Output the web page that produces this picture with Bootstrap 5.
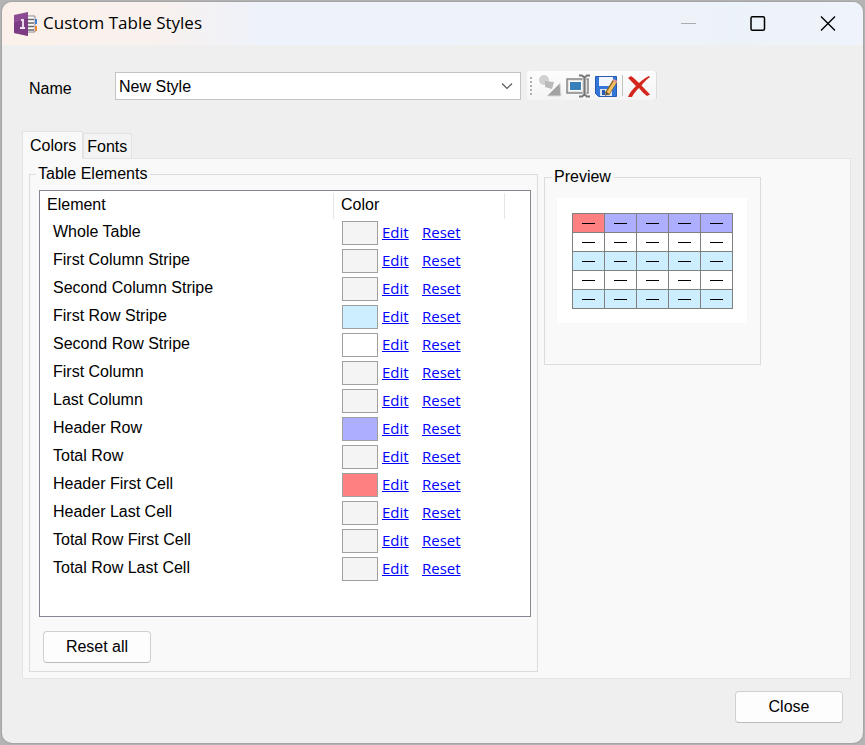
<!DOCTYPE html>
<html lang="en">
<head>
<meta charset="utf-8">
<meta name="viewport" content="width=device-width, initial-scale=1">
<title>Custom Table Styles</title>
<link href="https://cdn.jsdelivr.net/npm/bootstrap@5.3.0/dist/css/bootstrap.min.css" rel="stylesheet">
<style>
body{font:16px/20px "Liberation Sans",Arial,sans-serif;color:#000;background:#b4b4b4;padding:2px 2px 3px}
.dialog-window{min-height:calc(100vh - 5px);background:#efefef;border-radius:10px;box-shadow:0 0 1px 1px #a4a4a4}
.title-bar{height:43px;padding-left:12px;background:linear-gradient(90deg,#fbf1ea 0,#f8f1ee 18%,#eef2fa 30%,#eef3fa 75%,#ecf3f8 85%,#eff3fb 100%);border-radius:10px 10px 0 0}
.title-bar h1{font:17px/24px "Open Sans","Noto Sans",sans-serif;margin-left:5px;padding-bottom:2px}
.caption-btn{width:70px;height:43px;line-height:0}
.name-row{padding:26px 206px 0 27px}
.name-row label{width:86px;padding-top:6px}
.style-select{height:28px;padding:2px 32px 0 3px;border:1px solid #c4c4c4;border-radius:0;font-size:16px;line-height:20px;color:#000;background-size:12px 12px;background-position:right 7px center;background-image:url("data:image/svg+xml,%3Csvg xmlns='http://www.w3.org/2000/svg' viewBox='0 0 12 12'%3E%3Cpath d='M1 3.5 6 8.5 11 3.5' fill='none' stroke='%23555' stroke-width='1.1'/%3E%3C/svg%3E")}
.name-row .style-select{width:auto;min-width:0}
.tool-strip{height:29px;padding-left:3px;margin-left:6px;background:linear-gradient(#fdfdfd,#f4f4f4);border-radius:3px;width:130px;border-right:1px solid #ddd}
.tool-grip{flex:none;width:2px;height:18px;margin-right:6px;background:repeating-linear-gradient(#b0b0b0 0 2px,transparent 2px 4px)}
.tool-btn{flex:none;width:24px;height:24px;line-height:0;margin-right:4px}
.tool-rule{flex:none;width:1px;height:21px;background:#c4c4c4;margin-right:4px}
.tab-area{padding:31px 12px 0 20px}
.tab-list .nav-link{color:#000;border:1px solid #e2e2e2;border-bottom:0;border-radius:0;height:25px;padding:2px 4px 0 3px;background:#f3f3f3;font-size:16px;line-height:20px;margin:0}
.tab-list .nav-link.active{height:28px;padding:2px 6px 2px 7px;background:#f9f9f9;margin-bottom:-1px;position:relative}
.tab-pane-box{background:#f9f9f9;border:1px solid #e4e4e4;padding:5px 89px 6px 6px;gap:6px}
.group-box{border:1px solid #dcdcdc;padding:0 6px 8px 9px}
.group-box legend{float:none;width:auto;font-size:16px;line-height:20px;padding:0 3px 0 2px;margin:0 0 0 -3px}
.element-box{background:#fff;border:1px solid #828790;min-height:427px;margin-top:6px}
.element-table{table-layout:fixed;border-collapse:separate;border-spacing:0}
.element-table th{font-weight:400;height:28px;padding:0 7px;vertical-align:middle}
.element-table thead th{background:linear-gradient(#e5e5e5,#e5e5e5) right 2px/1px 26px no-repeat}
.element-table thead th:last-child{background:none}
.element-table tbody th{padding:3px 13px 5px}
.element-table td{height:28px;padding:0 0 0 8px}
.col-color{width:171px}.col-rest{width:25px}
.color-chip{width:36px;height:24px;border:1px solid #a0a0a0;background:#f4f4f4;margin-right:4px}
.chip-sky{background:#cef}.chip-white{background:#fff}.chip-violet{background:#aeaeff}.chip-coral{background:#ff8080}
.row-link{font:15px/20px "Open Sans","Noto Sans",sans-serif;color:#00f;width:40px;padding-bottom:2px;text-decoration:underline 1px #00f;text-underline-offset:1px}
.plain-btn{--bs-btn-bg:#fdfdfd;--bs-btn-color:#000;--bs-btn-border-color:#d0d0d0;--bs-btn-hover-bg:#f0f6fb;--bs-btn-hover-color:#000;width:108px;height:32px;padding:0;font-size:16px;line-height:20px;border-radius:4px;border-bottom-color:#bbb}
.reset-all{margin:14px 0 0 4px}
.preview-group{width:217px;min-height:198px;margin-top:3px;padding:0 9px 0 12px}
.preview-group legend{margin-left:-5px}
.preview-canvas{background:#fff;margin-top:11px;margin-right:4px;padding:15px 14px 14px 15px}
.sample-table{border-collapse:collapse;width:161px;table-layout:fixed}
.sample-table td{height:19px;border:1px solid #808080;padding:0;background:linear-gradient(#000,#000) 9px 9px/13px 1px no-repeat,var(--cell,#fff)}
.sample-head td{--cell:#aeaeff}.sample-head td:first-child{--cell:#ff8080}.sample-stripe td{--cell:#cef}
.dialog-footer{padding:12px 20px 20px}
</style>
<script src="https://cdn.jsdelivr.net/npm/bootstrap@5.3.0/dist/js/bootstrap.bundle.min.js"></script>
</head>
<body>
<main class="dialog-window d-flex flex-column">
<header class="title-bar d-flex align-items-center">
<svg width="24" height="24" viewBox="0 0 24 24" aria-hidden="true"><path fill="#fff" stroke="#918194" d="M12 4h9v16h-9z"/><path stroke="#666" stroke-width="1.6" d="M14 7.5h6M14 11h6M14 14.500h6M14 18h6"/><path fill="#3f80d0" d="M21 7h2v5h-2z"/><path fill="#f08a28" d="M21 14h2v5h-2z"/><path fill="#8b4c93" d="M0 3 14 0v24L0 21z"/><path fill="#6f2f78" d="M0 11 14 6v18L0 21z" opacity=".55"/><path fill="none" stroke="#f3e5f5" stroke-width="1.800" d="M7 8h2v8M6 16h5"/></svg>
<h1 class="mb-0 me-auto">Custom Table Styles</h1>
<button class="caption-btn btn p-0 border-0" type="button" aria-label="Minimize" disabled><svg width="16" height="16" viewBox="0 0 16 16"><path stroke="#888" d="M1 7.500h15"/></svg></button>
<button class="caption-btn btn p-0 border-0" type="button" aria-label="Maximize"><svg width="16" height="16" viewBox="0 0 16 16"><rect x="1" y="0.750" width="13.500" height="13.500" rx="1.500" fill="none" stroke="#000" stroke-width="1.500"/></svg></button>
<button class="caption-btn btn p-0 border-0" type="button" aria-label="Close window"><svg width="16" height="16" viewBox="0 0 16 16"><path stroke="#000" stroke-width="1.400" d="m1 .5 14 14M15 .5 1 14.500"/></svg></button>
</header>
<div class="name-row d-flex align-items-center">
<label class="flex-shrink-0" for="styleName">Name</label>
<select class="style-select form-select flex-grow-1" id="styleName"><option>New Style</option></select>
<div class="tool-strip d-flex align-items-center flex-shrink-0" role="toolbar" aria-label="Style actions">
<span class="tool-grip"></span>
<button class="tool-btn btn p-0 border-0" type="button" aria-label="Apply style" disabled><svg width="24" height="24" viewBox="0 0 24 24"><circle cx="6" cy="6" r="5" fill="#bbb"/><path fill="#999" d="m7 7 9 1-2 7-7-2z"/><path fill="#777" stroke="#ccc" d="m22 9 1 13H9z"/></svg></button>
<button class="tool-btn btn p-0 border-0" type="button" aria-label="Rename style"><svg width="24" height="24" viewBox="0 0 24 24"><path fill="#e5e5e5" stroke="#888" stroke-width="1.500" d="M1 5h21v14H1z"/><path fill="#397fb9" stroke="#fff" d="M3.500 7.500h12v9h-12z"/><path fill="none" stroke="#ddd" stroke-width="4" d="M18.500 2v20"/><path fill="none" stroke="#777" stroke-width="2" d="M13 1.500h3l2.500 2 2.500-2h3M18.500 3v19M13 22.500h3l2.500-2 2.500 2h3"/></svg></button>
<button class="tool-btn btn p-0 border-0" type="button" aria-label="Save style"><svg width="24" height="24" viewBox="0 0 24 24"><path fill="#3475d9" stroke="#285bae" d="M1.500 2.500h21v20h-18l-3-3z"/><path fill="#f2f6fc" d="M5 3h14v9H5z"/><path fill="#dce3ec" d="M6 15h12v7H6z"/><path fill="#285bae" d="M8 16h3v5H8z"/><path stroke="#8d6723" stroke-width="5" d="m21 7-8 13"/><path stroke="#f7c465" stroke-width="3" d="m21 8-7 11"/><path stroke="#e79a93" stroke-width="4" d="m21.500 6-1 2"/><path fill="#5b4a37" d="m11 22 1-4 3 2z"/></svg></button>
<span class="tool-rule"></span>
<button class="tool-btn btn p-0 border-0" type="button" aria-label="Delete style"><svg width="24" height="24" viewBox="0 0 24 24"><path fill="#d3271d" d="M1 4 4 2c3 2 5 4 8 7 3-3 6-5 10-7l1 1c-3 2-6 5-8.500 8.500 3 3 5.500 6 8.500 9L20 22c-3-2-5.500-5-8-8-3 3-5 5-7 9H1c2-5 5-8 8-11-3-3-5-5-8-8z"/></svg></button>
</div>
</div>
<section class="tab-area flex-grow-1 d-flex flex-column">
<div class="tab-list nav align-items-end" role="tablist">
<button class="nav-link active" type="button" role="tab" aria-selected="true" aria-controls="colorsPane">Colors</button>
<button class="nav-link" type="button" role="tab" aria-selected="false">Fonts</button>
</div>
<div class="tab-pane-box d-flex align-items-start flex-grow-1" id="colorsPane" role="tabpanel">
<fieldset class="group-box flex-grow-1">
<legend>Table Elements</legend>
<div class="element-box">
<table class="element-table w-100">
<colgroup><col><col class="col-color"><col class="col-rest"></colgroup>
<thead><tr><th scope="col">Element</th><th scope="col">Color</th><th></th></tr></thead>
<tbody>
<tr><th scope="row">Whole Table</th><td colspan="2"><div class="d-flex align-items-center"><span class="color-chip"></span><a class="row-link" href="#">Edit</a><a class="row-link" href="#">Reset</a></div></td></tr>
<tr><th scope="row">First Column Stripe</th><td colspan="2"><div class="d-flex align-items-center"><span class="color-chip"></span><a class="row-link" href="#">Edit</a><a class="row-link" href="#">Reset</a></div></td></tr>
<tr><th scope="row">Second Column Stripe</th><td colspan="2"><div class="d-flex align-items-center"><span class="color-chip"></span><a class="row-link" href="#">Edit</a><a class="row-link" href="#">Reset</a></div></td></tr>
<tr><th scope="row">First Row Stripe</th><td colspan="2"><div class="d-flex align-items-center"><span class="color-chip chip-sky"></span><a class="row-link" href="#">Edit</a><a class="row-link" href="#">Reset</a></div></td></tr>
<tr><th scope="row">Second Row Stripe</th><td colspan="2"><div class="d-flex align-items-center"><span class="color-chip chip-white"></span><a class="row-link" href="#">Edit</a><a class="row-link" href="#">Reset</a></div></td></tr>
<tr><th scope="row">First Column</th><td colspan="2"><div class="d-flex align-items-center"><span class="color-chip"></span><a class="row-link" href="#">Edit</a><a class="row-link" href="#">Reset</a></div></td></tr>
<tr><th scope="row">Last Column</th><td colspan="2"><div class="d-flex align-items-center"><span class="color-chip"></span><a class="row-link" href="#">Edit</a><a class="row-link" href="#">Reset</a></div></td></tr>
<tr><th scope="row">Header Row</th><td colspan="2"><div class="d-flex align-items-center"><span class="color-chip chip-violet"></span><a class="row-link" href="#">Edit</a><a class="row-link" href="#">Reset</a></div></td></tr>
<tr><th scope="row">Total Row</th><td colspan="2"><div class="d-flex align-items-center"><span class="color-chip"></span><a class="row-link" href="#">Edit</a><a class="row-link" href="#">Reset</a></div></td></tr>
<tr><th scope="row">Header First Cell</th><td colspan="2"><div class="d-flex align-items-center"><span class="color-chip chip-coral"></span><a class="row-link" href="#">Edit</a><a class="row-link" href="#">Reset</a></div></td></tr>
<tr><th scope="row">Header Last Cell</th><td colspan="2"><div class="d-flex align-items-center"><span class="color-chip"></span><a class="row-link" href="#">Edit</a><a class="row-link" href="#">Reset</a></div></td></tr>
<tr><th scope="row">Total Row First Cell</th><td colspan="2"><div class="d-flex align-items-center"><span class="color-chip"></span><a class="row-link" href="#">Edit</a><a class="row-link" href="#">Reset</a></div></td></tr>
<tr><th scope="row">Total Row Last Cell</th><td colspan="2"><div class="d-flex align-items-center"><span class="color-chip"></span><a class="row-link" href="#">Edit</a><a class="row-link" href="#">Reset</a></div></td></tr>
</tbody>
</table>
</div>
<button class="btn plain-btn reset-all" type="button">Reset all</button>
</fieldset>
<fieldset class="group-box preview-group flex-shrink-0">
<legend>Preview</legend>
<div class="preview-canvas">
<table class="sample-table" aria-label="Style preview">
<tbody>
<tr class="sample-head"><td></td><td></td><td></td><td></td><td></td></tr>
<tr><td></td><td></td><td></td><td></td><td></td></tr>
<tr class="sample-stripe"><td></td><td></td><td></td><td></td><td></td></tr>
<tr><td></td><td></td><td></td><td></td><td></td></tr>
<tr class="sample-stripe"><td></td><td></td><td></td><td></td><td></td></tr>
</tbody>
</table>
</div>
</fieldset>
</div>
</section>
<footer class="dialog-footer text-end"><button class="btn plain-btn" type="button">Close</button></footer>
</main>
</body>
</html>
